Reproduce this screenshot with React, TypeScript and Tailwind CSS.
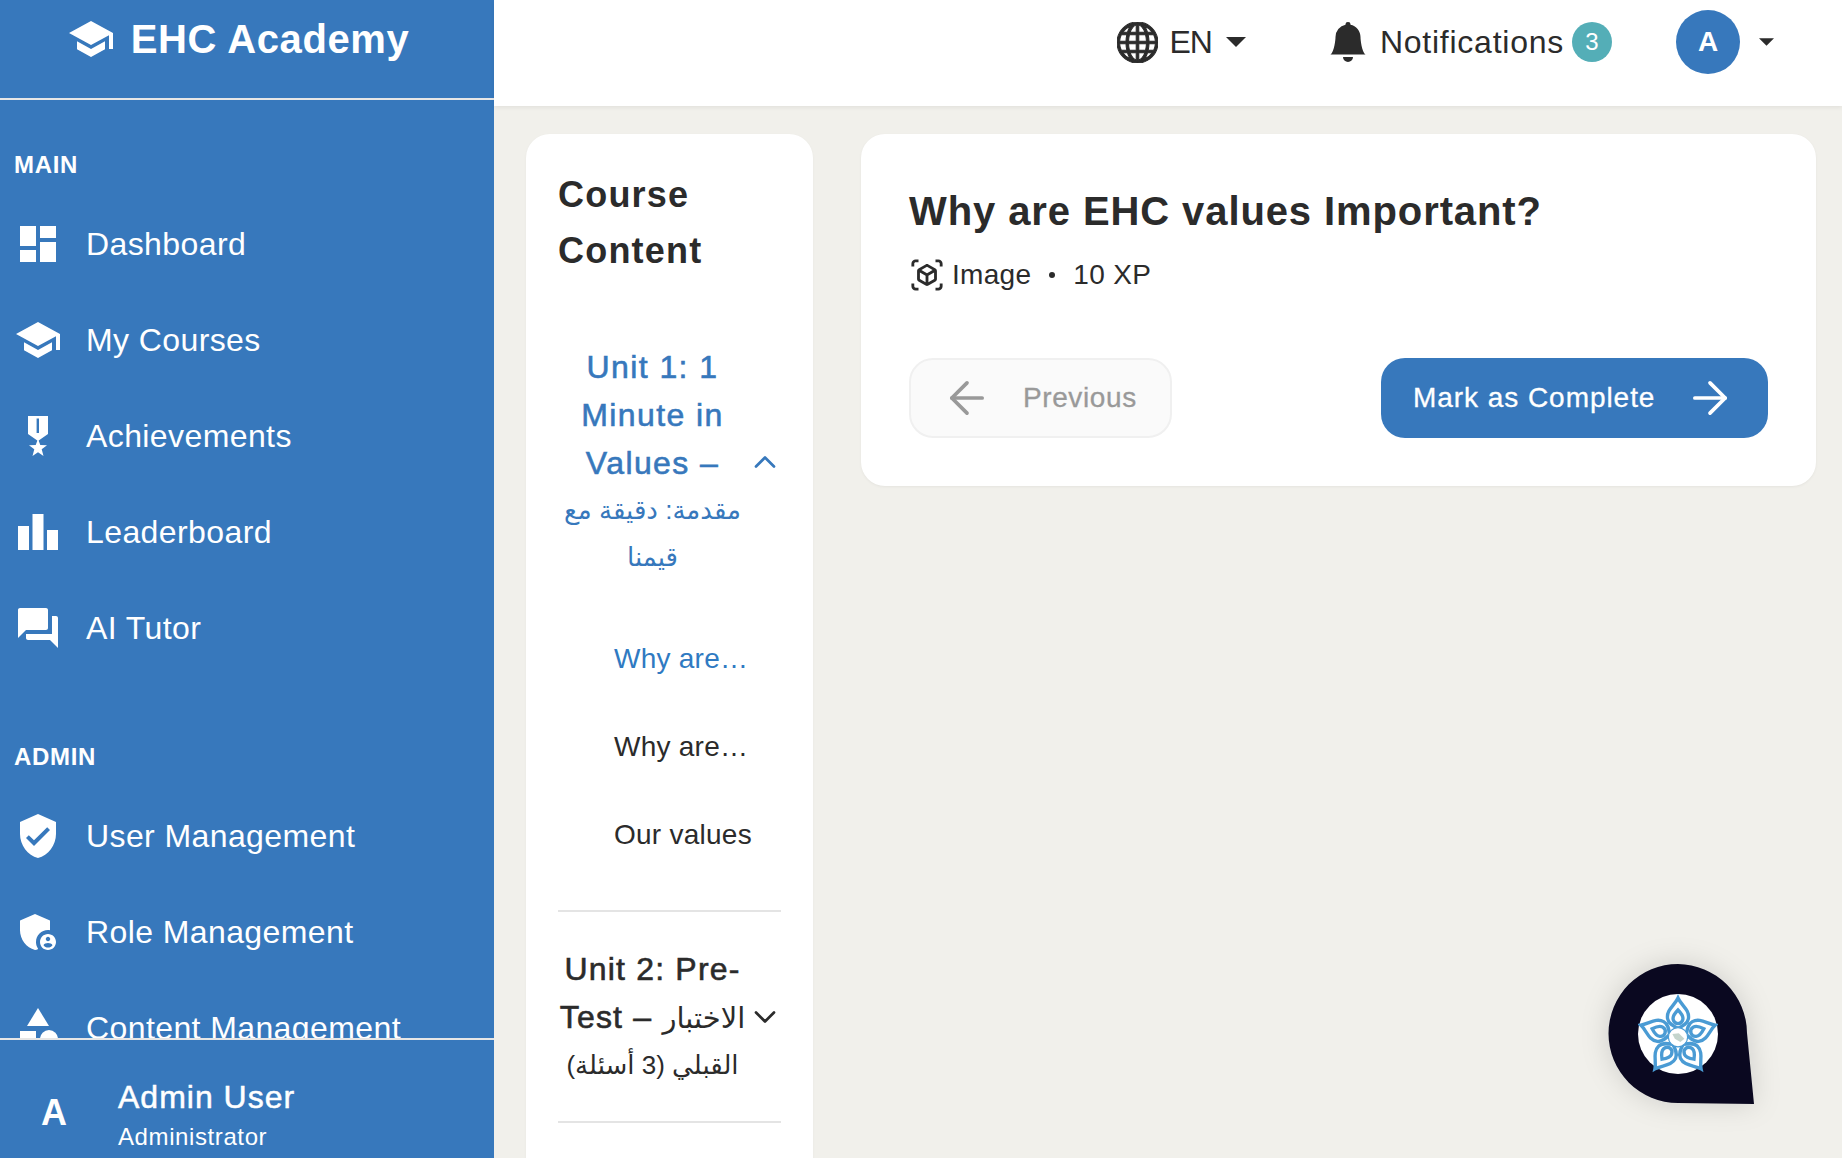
import React from "react";
import { MdDashboard, MdSchool, MdLeaderboard, MdForum, MdVerifiedUser, MdAdminPanelSettings, MdCategory, MdOutlineViewInAr } from "react-icons/md";
import { BsGlobe, BsBellFill } from "react-icons/bs";
import { ArrowLeft, ArrowRight, ChevronUp, ChevronDown } from "lucide-react";

function Medal() {
  return (
    <svg width="20" height="40" viewBox="0 0 20 40" fill="white">
      <path fillRule="evenodd" d="M0 0 H20 V18 L10 25 L0 18 Z M8.6 2.5 V17 H11 V2.5 Z" />
      <path d="M10 23 L12.3 29 L19 29.2 L13.7 33.2 L15.5 40 L10 36.2 L4.5 40 L6.3 33.2 L1 29.2 L7.7 29 Z" />
    </svg>
  );
}

function NavItem({ icon, label }: { icon: React.ReactNode; label: string }) {
  return (
    <div className="flex items-center h-[96px] shrink-0">
      <div className="w-[86px] pl-[16px] flex items-center shrink-0">
        <div className="w-[44px] h-[44px] flex items-center justify-center">{icon}</div>
      </div>
      <span className="text-[32px] leading-[48px] tracking-[0.4px] whitespace-nowrap">{label}</span>
    </div>
  );
}

function Caret({ w, h }: { w: number; h: number }) {
  return (
    <svg width={w} height={h} viewBox="0 0 10 5" fill="#2b2b2b">
      <path d="M0 0 H10 L5 5 Z" />
    </svg>
  );
}

function Logo() {
  const petal = "M50 5 C54 14 65 20 63 31 C62 37 56 40 50 43 C44 40 38 37 37 31 C35 20 46 14 50 5 Z";
  const inner = "M50 20 C54 24 57 28 56 32 C55 36 52 37 50 37 C48 37 45 36 44 32 C43 28 46 24 50 20 Z";
  return (
    <svg width="80" height="80" viewBox="0 0 100 100">
      <circle cx="50" cy="50" r="50" fill="white" />
      {[0, 72, 144, 216, 288].map((a) => (
        <g key={a} transform={`rotate(${a} 50 54)`} fill="none" stroke="#4a9bd4" strokeWidth="4.2">
          <path d={petal} />
          <path d={inner} />
        </g>
      ))}
      <circle cx="50" cy="54" r="12" fill="white" stroke="#4a9bd4" strokeWidth="1.5" />
      <path d="M43 50 L51 49 L58 56 L53 60 L46 56 Z" fill="#c4d4cc" />
    </svg>
  );
}

export default function App() {
  const ar = { fontFamily: '"Liberation Sans", "DejaVu Sans", sans-serif' };
  return (
    <div className="relative flex w-full h-[1158px] overflow-hidden bg-[#f1f0eb] text-[#2b2b2b] font-['Liberation_Sans',sans-serif]">
      <aside className="w-[494px] shrink-0 h-full flex flex-col bg-[#3778bc] text-white">
        <div className="h-[100px] shrink-0 border-b-2 border-[#e6e6e6] flex justify-center pt-[14px] pr-[18px]">
          <div className="flex items-start gap-[16px] h-[50px]">
            <MdSchool size={48} className="mt-[1px]" />
            <span className="text-[40px] leading-[50px] font-bold tracking-[0.6px]">EHC Academy</span>
          </div>
        </div>
        <nav className="flex-1 min-h-0 overflow-hidden">
          <div className="pl-[14px] pt-[51px] pb-[17px] text-[24px] leading-[28px] font-bold tracking-[0.7px]">MAIN</div>
          <NavItem icon={<MdDashboard size={48} className="shrink-0" />} label="Dashboard" />
          <NavItem icon={<MdSchool size={48} className="shrink-0" />} label="My Courses" />
          <NavItem icon={<Medal />} label="Achievements" />
          <NavItem icon={<MdLeaderboard size={48} className="shrink-0" />} label="Leaderboard" />
          <NavItem icon={<MdForum size={48} className="shrink-0" />} label="AI Tutor" />
          <div className="pl-[14px] pt-[65px] pb-[17px] mt-[2px] text-[24px] leading-[28px] font-bold tracking-[0.7px]">ADMIN</div>
          <NavItem icon={<MdVerifiedUser size={48} className="shrink-0" />} label="User Management" />
          <NavItem icon={<MdAdminPanelSettings size={48} className="shrink-0" />} label="Role Management" />
          <NavItem icon={<MdCategory size={48} className="shrink-0" />} label="Content Management" />
        </nav>
        <div className="h-[120px] shrink-0 border-t-2 border-[#e6e6e6] flex items-start">
          <div className="w-[118px] pl-[41px] pt-[49px] text-[36px] leading-[48px] font-bold">A</div>
          <div className="pt-[33px]">
            <div className="text-[32px] leading-[48px] tracking-[1px] [-webkit-text-stroke:0.5px_white]">Admin User</div>
            <div className="text-[24px] leading-[32px] tracking-[0.6px]">Administrator</div>
          </div>
        </div>
      </aside>

      <div className="flex-1 min-w-0 flex flex-col">
        <header className="h-[106px] shrink-0 bg-white shadow-[0_2px_4px_rgba(0,0,0,0.06)] flex items-start justify-end pr-[68px]">
          <div className="flex items-center h-[84px]">
            <BsGlobe size={41} color="#2b2b2b" stroke="#2b2b2b" strokeWidth={0.4} />
            <span className="ml-[12px] text-[32px] tracking-[-1px]">EN</span>
            <span className="ml-[14px]"><Caret w={20} h={10} /></span>
            <span className="ml-[82px]"><BsBellFill size={40} color="#2b2b2b" /></span>
            <span className="ml-[12px] text-[32px] tracking-[0.75px]">Notifications</span>
            <span className="ml-[8px] w-[40px] h-[40px] rounded-full bg-[#54aeb7] text-white text-[24px] flex items-center justify-center">3</span>
            <span className="ml-[64px] w-[64px] h-[64px] rounded-full bg-[#3778bc] text-white text-[28px] font-bold flex items-center justify-center">A</span>
            <span className="ml-[19px]"><Caret w={15} h={8} /></span>
          </div>
        </header>

        <main className="flex-1 min-h-0 flex items-start gap-[48px] pl-[32px] pr-[26px] pt-[28px]">
          <section className="w-[287px] shrink-0 h-[1100px] rounded-[24px] bg-white px-[32px] pt-[33px] shadow-[0_1px_3px_rgba(0,0,0,0.04)]">
            <h2 className="text-[36px] leading-[56px] font-bold tracking-[1.2px]">Course<br />Content</h2>
            <div className="mt-[64px] flex items-center text-[#3778bc]">
              <div className="flex-1 text-center text-[32px] leading-[0] tracking-[1.4px]" style={ar}>
                <span className="leading-[48px] [-webkit-text-stroke:0.6px_#3778bc]">Unit 1: 1 Minute in Values – </span>
                <span className="text-[26px] leading-[47px] tracking-normal">مقدمة: دقيقة مع قيمنا</span>
              </div>
              <ChevronUp size={36} strokeWidth={1.8} className="shrink-0 mr-[-2px]" />
            </div>
            <div className="mt-[58px] pl-[56px] text-[28px] leading-[40px] tracking-[0.25px]">
              <div className="text-[#2f7ac2] h-[88px]">Why are…</div>
              <div className="h-[88px]">Why are…</div>
              <div className="h-[40px] whitespace-nowrap">Our values</div>
            </div>
            <div className="mt-[55px] border-t-2 border-[#e4e4e4]" />
            <div className="mt-[33px] flex items-center">
              <div className="flex-1 text-center text-[32px] leading-[0] tracking-[1.2px]" style={ar}>
                <span className="leading-[48px] [-webkit-text-stroke:0.6px_#2b2b2b]">Unit 2: Pre-Test – </span>
                <span className="text-[29px] leading-[47px] tracking-normal">الاختبار </span>
                <span className="text-[26px] leading-[47px] tracking-normal">القبلي (3 أسئلة)</span>
              </div>
              <ChevronDown size={36} strokeWidth={1.8} className="shrink-0 mr-[-2px]" />
            </div>
            <div className="mt-[32px] border-t-2 border-[#e4e4e4]" />
          </section>

          <section className="flex-1 min-w-0 h-[352px] rounded-[24px] bg-white px-[48px] pt-[47px] shadow-[0_1px_3px_rgba(0,0,0,0.05)]">
            <h1 className="text-[40px] leading-[60px] font-bold tracking-[0.9px]">Why are EHC values Important?</h1>
            <div className="mt-[13px] flex items-center text-[28px] leading-[42px] tracking-[0.3px]">
              <MdOutlineViewInAr size={34} className="shrink-0 ml-[1px]" />
              <span className="ml-[8px]">Image</span>
              <span className="ml-[18px] w-[6px] h-[6px] rounded-full bg-[#2b2b2b]" />
              <span className="ml-[18px]">10 XP</span>
            </div>
            <div className="mt-[62px] flex items-center justify-between">
              <button className="w-[263px] h-[80px] rounded-[24px] border-2 border-[#f0f0f0] bg-[#fafafa] text-[#999999] text-[28px] flex items-center pl-[30px]">
                <ArrowLeft size={52} strokeWidth={1.7} className="shrink-0" />
                <span className="ml-[30px] tracking-[0.6px] [-webkit-text-stroke:0.3px_#999999]">Previous</span>
              </button>
              <button className="w-[387px] h-[80px] rounded-[24px] bg-[#3778bc] text-white text-[28px] flex items-center pl-[32px]">
                <span className="tracking-[0.95px] [-webkit-text-stroke:0.3px_white]">Mark as Complete</span>
                <ArrowRight size={52} strokeWidth={1.7} className="shrink-0 ml-[29px]" />
              </button>
            </div>
          </section>
        </main>
      </div>

      <div className="absolute left-[1604px] top-[960px] w-[152px] h-[146px]">
        <svg width="152" height="146" viewBox="0 0 152 146" fill="#0a0820" className="overflow-visible drop-shadow-[0_0_14px_rgba(0,0,0,0.14)]">
          <path d="M74 4 A69.5 69.5 0 0 0 74 143 L150 144 L143 73 A69.5 69.5 0 0 0 74 4 Z" />
        </svg>
        <div className="absolute left-[34px] top-[34px] w-[80px] h-[80px]">
          <Logo />
        </div>
      </div>
    </div>
  );
}
